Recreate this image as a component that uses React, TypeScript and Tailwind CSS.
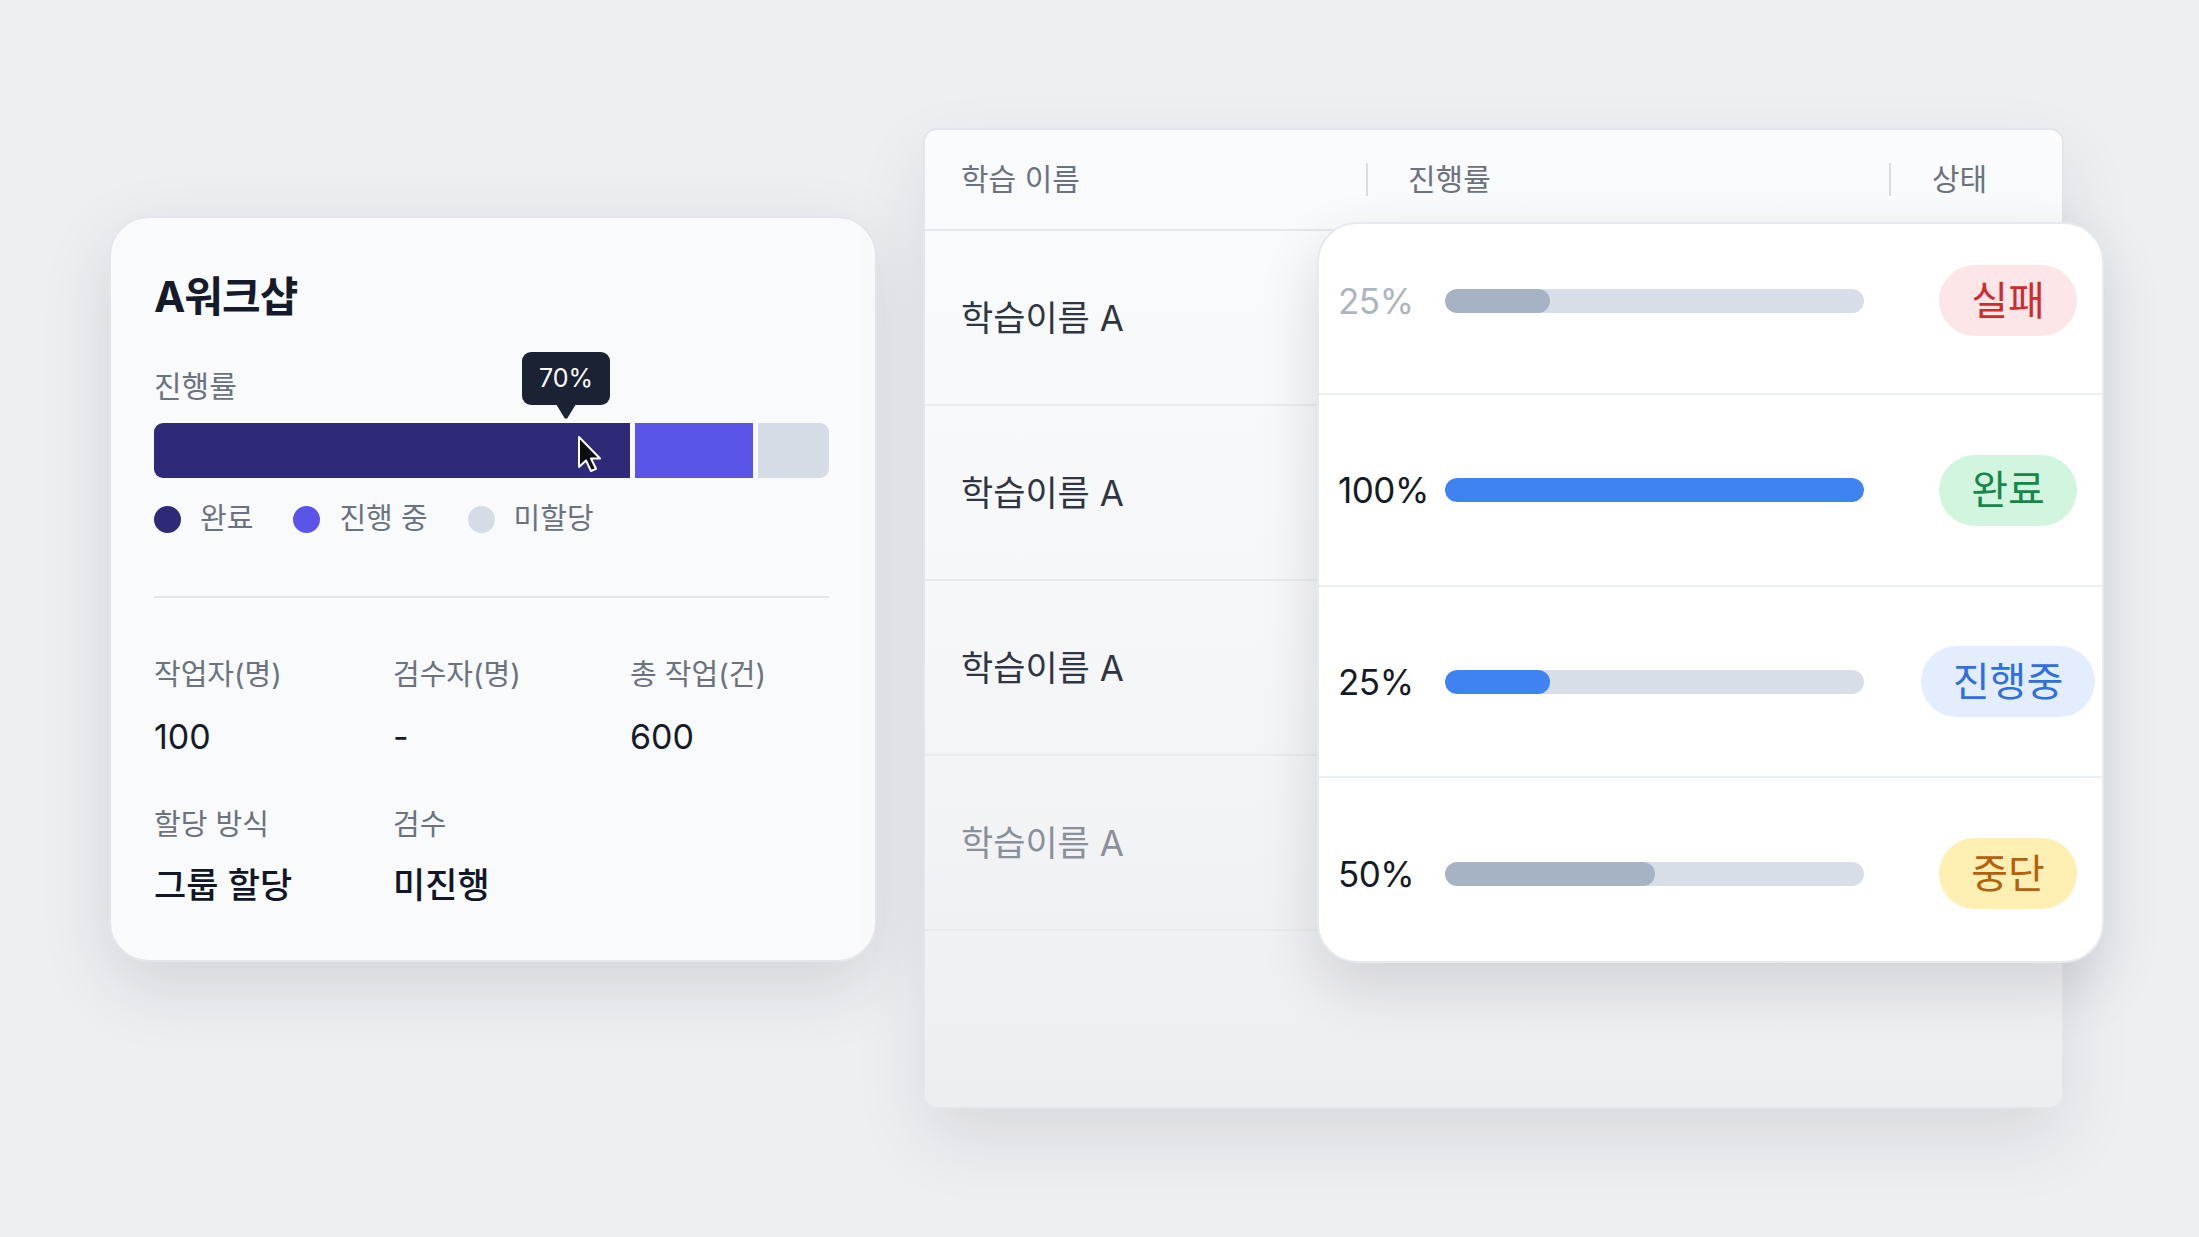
import React from "react";

const legend = [
  { label: "완료", dot: "bg-[#2f2a78]" },
  { label: "진행 중", dot: "bg-[#5b54e8]" },
  { label: "미할당", dot: "bg-[#d6dce5]" },
];

const stats = [
  { label: "작업자(명)", value: "100" },
  { label: "검수자(명)", value: "-" },
  { label: "총 작업(건)", value: "600" },
];

const progressRows = [
  { pct: 25, text: "text-[#adb5c1]", fill: "bg-[#a6b3c4]", badge: "실패", badgeCls: "bg-[#fde6e7] text-[#cf2a30]", h: "h-[171px] pb-4" },
  { pct: 100, text: "text-[#141a26]", fill: "bg-[#3f83f2]", badge: "완료", badgeCls: "bg-[#d2f5df] text-[#17864a]", h: "h-[192px]" },
  { pct: 25, text: "text-[#141a26]", fill: "bg-[#3f83f2]", badge: "진행중", badgeCls: "bg-[#e3edfd] text-[#2f6fe0]", h: "h-[191px]" },
  { pct: 50, text: "text-[#141a26]", fill: "bg-[#a6b3c4]", badge: "중단", badgeCls: "bg-[#feefb3] text-[#b4600f]", h: "flex-1 pt-2" },
];

const names = ["text-[#2f3542]", "text-[#2f3542]", "text-[#2f3542]", "text-[#8a9099]"];

function Cursor() {
  return (
    <svg width="24" height="38" viewBox="0 0 24 38" className="absolute left-[423px] top-[12px]">
      <path d="M2 2 L2 32 L9 25.5 L14 36 L19 33.8 L14 23.5 L23 23.5 Z" fill="#0b0d12" stroke="#ffffff" strokeWidth="2" strokeLinejoin="round" />
    </svg>
  );
}

function WorkshopCard() {
  return (
    <div className="mt-[216px] ml-[109px] w-[768px] h-[746px] shrink-0 rounded-[40px] border-2 border-[#e3e7ec] bg-[#f8fafc] shadow-[0_24px_70px_rgba(15,23,42,0.13)] px-[43px] pt-[54px]">
      <h1 className="text-[42px] leading-[50px] font-bold text-[#151b2b] tracking-[-1px]">A워크샵</h1>
      <div className="mt-[44px] text-[30px] leading-[40px] text-[#6b7280]">진행률</div>

      {/* stacked bar with hover tooltip */}
      <div className="relative mt-[17px] flex h-[55px] w-[675px] gap-[5px]">
        <div className="h-full w-[476px] rounded-l-[9px] bg-[#2f2a78]" />
        <div className="h-full w-[118px] bg-[#5b54e8]" />
        <div className="h-full flex-1 rounded-r-[9px] bg-[#d6dce5]" />
        <div className="absolute left-[368px] top-[-71px] flex flex-col items-center">
          <div className="flex h-[53px] w-[88px] items-center justify-center rounded-[9px] bg-[#1a2233] text-[25px] text-white">70%</div>
          <svg width="20" height="15" viewBox="0 0 20 15" className="-mt-px">
            <path d="M0 0 L20 0 L11.5 14 Q10 15.5 8.5 14 Z" fill="#1a2233" />
          </svg>
        </div>
        <Cursor />
      </div>

      <div className="mt-[21px] flex h-[40px] items-center gap-x-[40px]">
        {legend.map((l) => (
          <div key={l.label} className="flex items-center gap-[19px]">
            <span className={`h-[27px] w-[27px] rounded-full ${l.dot}`} />
            <span className="text-[29px] leading-[40px] text-[#6b7280]">{l.label}</span>
          </div>
        ))}
      </div>

      <div className="mt-[57px] h-[2px] w-[675px] bg-[#e2e6eb]" />

      <div className="grid grid-cols-[239px_237px_1fr]">
        {stats.map((s) => (
          <div key={s.label}>
            <div className="mt-[59px] text-[29px] leading-[36px] text-[#6b7280]">{s.label}</div>
            <div className="mt-[22px] text-[34px] leading-[44px] text-[#151b2b]">{s.value}</div>
          </div>
        ))}
        <div>
          <div className="mt-[48px] text-[29px] leading-[36px] text-[#6b7280]">할당 방식</div>
          <div className="mt-[20px] text-[35px] leading-[44px] font-medium text-[#111726]">그룹 할당</div>
        </div>
        <div>
          <div className="mt-[48px] text-[29px] leading-[36px] text-[#6b7280]">검수</div>
          <div className="mt-[20px] text-[35px] leading-[44px] font-medium text-[#111726]">미진행</div>
        </div>
      </div>
    </div>
  );
}

function ProgressCard() {
  return (
    <div className="absolute left-[394px] top-[94px] flex h-[741px] w-[787px] flex-col overflow-hidden rounded-[40px] border-2 border-[#e6e9ee] bg-white shadow-[0_24px_60px_rgba(15,23,42,0.14)]">
      {progressRows.map((r, i) => (
        <div
          key={i}
          className={`flex items-center pl-[19px] ${r.h} ${i < progressRows.length - 1 ? "border-b-2 border-[#edf0f3]" : ""}`}
        >
          <span className={`w-[107px] shrink-0 text-[35px] leading-[44px] tracking-[-0.5px] ${r.text}`}>{r.pct}%</span>
          <div className="h-[24px] w-[419px] shrink-0 overflow-hidden rounded-full bg-[#d8dee8]">
            <div className={`h-full rounded-full ${r.fill}`} style={{ width: `${r.pct}%` }} />
          </div>
          <div className="ml-[48px] flex w-[192px] shrink-0 justify-center">
            <span className={`flex h-[71px] items-center rounded-full px-[32px] text-[40px] leading-none ${r.badgeCls}`}>{r.badge}</span>
          </div>
        </div>
      ))}
    </div>
  );
}

function TablePanel() {
  return (
    <div className="relative mt-[128px] ml-[46px] h-[981px] w-[1141px] shrink-0">
      <div className="h-full w-full overflow-hidden rounded-[14px] border-2 border-[#e2e6eb] bg-gradient-to-b from-[#fafbfc] via-[#f5f7f9] to-[#eceef1] shadow-[0_30px_70px_rgba(15,23,42,0.10)]">
        <div className="flex h-[101px] items-center border-b-2 border-[#e4e7eb] text-[30px] text-[#6b7280]">
          <div className="w-[441px] pl-[36px]">학습 이름</div>
          <div className="h-[33px] w-[2px] bg-[#d9dde3]" />
          <div className="w-[521px] pl-[40px]">진행률</div>
          <div className="h-[33px] w-[2px] bg-[#d9dde3]" />
          <div className="pl-[41px]">상태</div>
        </div>
        {names.map((c, i) => (
          <div key={i} className="flex h-[175px] items-center border-b-2 border-[#e9ecef] pl-[36px]">
            <span className={`text-[35px] leading-[44px] ${c}`}>학습이름 A</span>
          </div>
        ))}
      </div>
      <ProgressCard />
    </div>
  );
}

export default function App() {
  return (
    <div className="flex h-[1237px] w-full items-start overflow-hidden bg-[#edf0f3] font-[family-name:Inter,'Noto_Sans_CJK_KR',sans-serif]">
      <WorkshopCard />
      <TablePanel />
    </div>
  );
}
